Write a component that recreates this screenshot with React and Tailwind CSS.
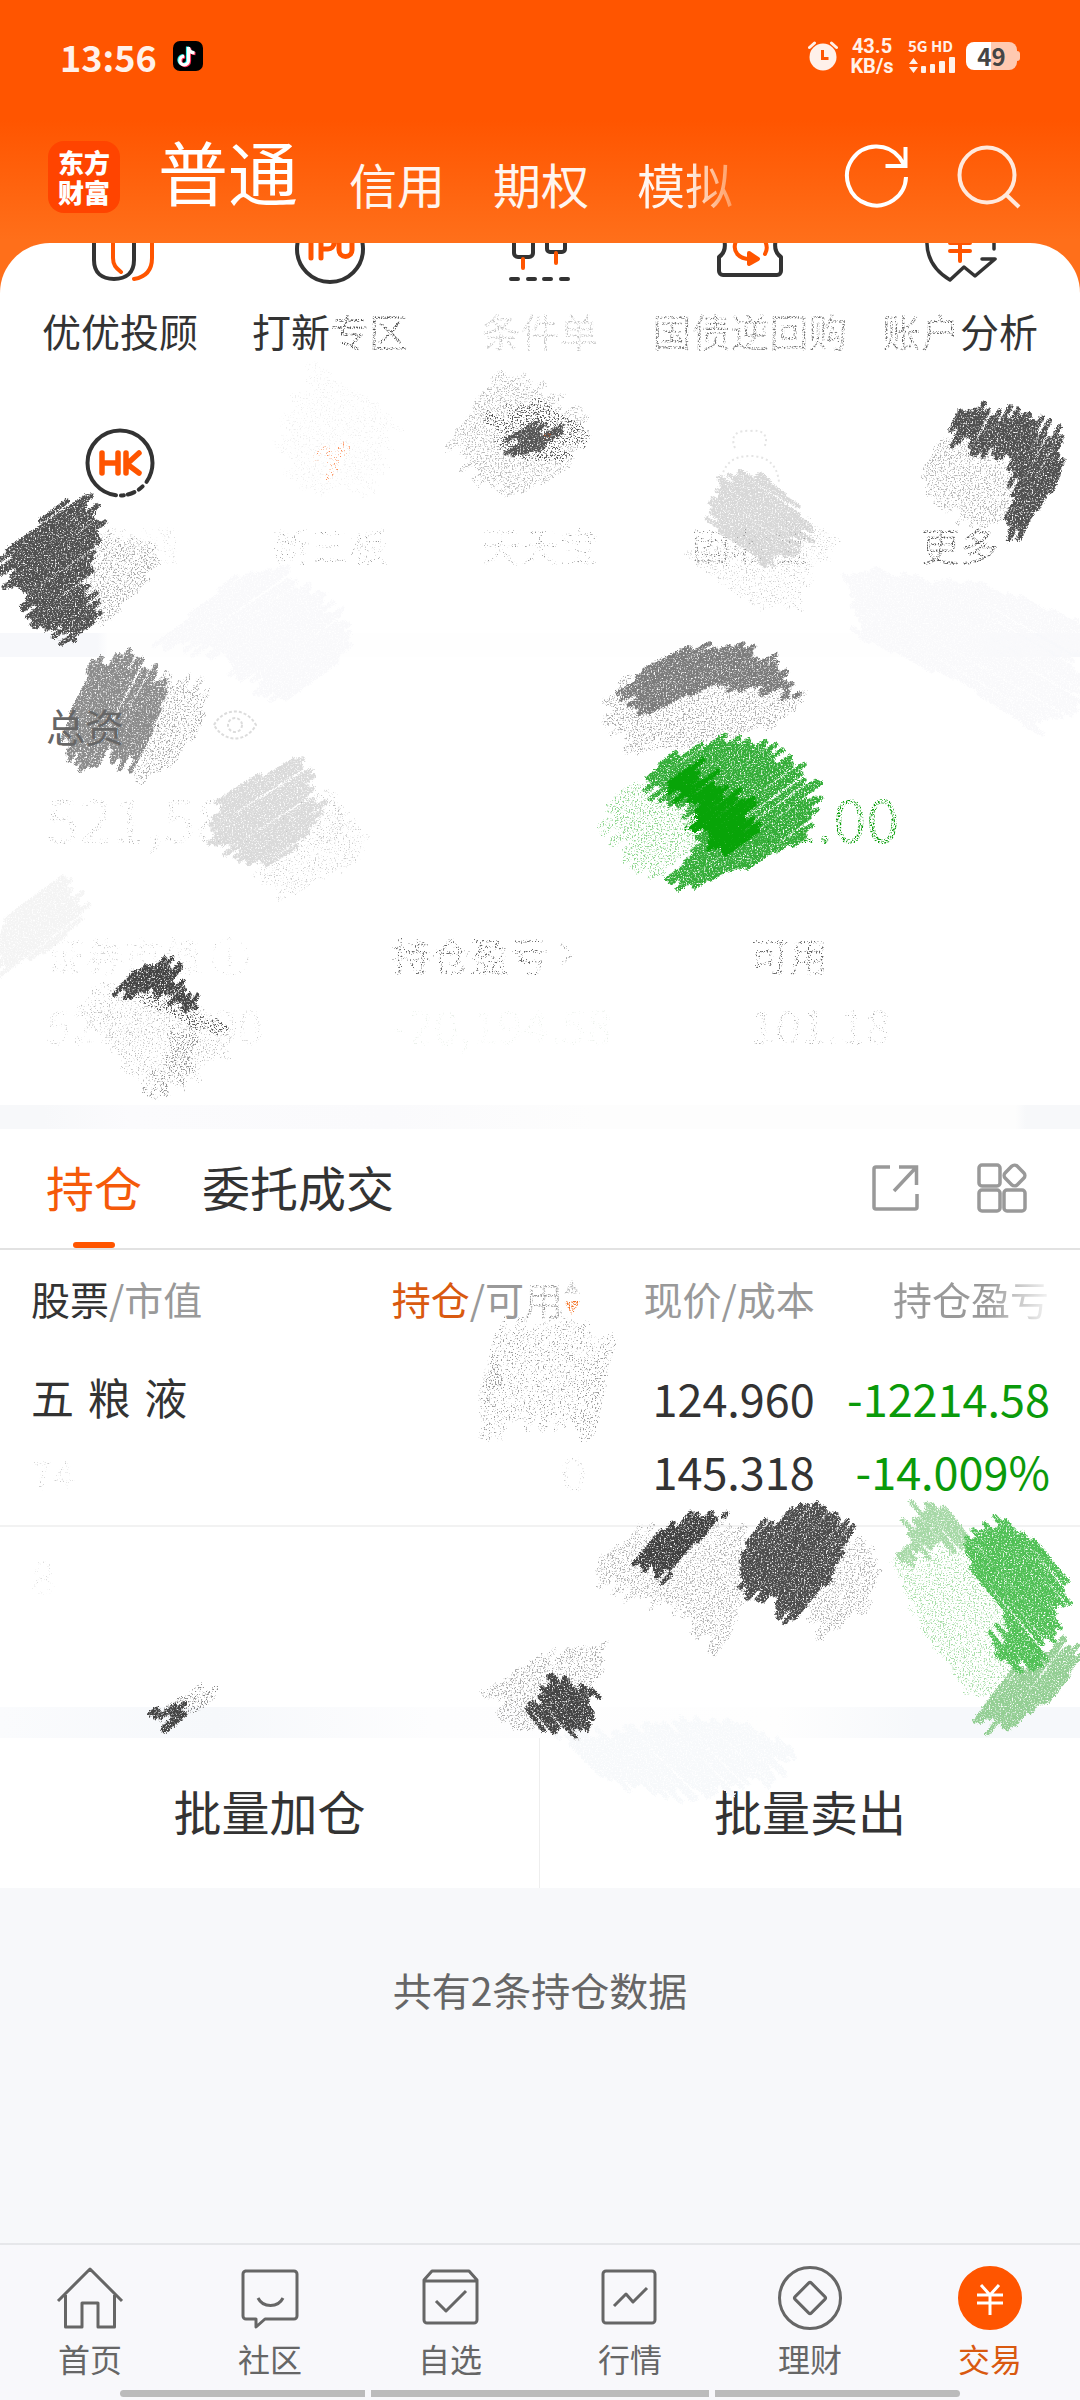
import React from 'react';

const DARK = '#333333';
const ORANGE = '#ff5500';

/* ---------- pencil scribbles ---------- */

const makeRandom = (seed) => {
  let s = seed * 7919 + 17;
  return () => {
    s = (s * 16807) % 2147483647;
    return s / 2147483647;
  };
};

// fills a polygon with parallel rough strokes
const hatch = (points, angle, seed, jitter = 22, step = 4) => {
  const rnd = makeRandom(seed);
  const a = (angle * Math.PI) / 180;
  const cos = Math.cos(a);
  const sin = Math.sin(a);
  const pts = points.map(([x, y]) => [x * cos + y * sin, -x * sin + y * cos]);
  const vs = pts.map((p) => p[1]);
  const max = Math.max(...vs);
  let d = '';
  for (let v = Math.min(...vs) + 2; v < max; v += step * (0.7 + rnd() * 0.6)) {
    const hits = [];
    pts.forEach((p, i) => {
      const q = pts[(i + 1) % pts.length];
      if ((p[1] <= v) !== (q[1] <= v)) hits.push(p[0] + ((v - p[1]) / (q[1] - p[1])) * (q[0] - p[0]));
    });
    hits.sort((m, n) => m - n);
    for (let i = 0; i + 1 < hits.length; i += 2) {
      const u1 = hits[i] + (rnd() - 0.5) * jitter;
      const u2 = hits[i + 1] + (rnd() - 0.5) * jitter;
      const w = v + (rnd() - 0.5) * 3;
      d += `M${(u1 * cos - v * sin).toFixed(1)} ${(u1 * sin + v * cos).toFixed(1)}L${(u2 * cos - w * sin).toFixed(1)} ${(u2 * sin + w * cos).toFixed(1)}`;
    }
  }
  return d;
};

const SCRIBBLES = [
  // quick entries
  { c: '#a8a8a8', f: 'speckle', a: -35, p: [[80, 540], [118, 533], [150, 552], [152, 580], [102, 626], [70, 610]] },
  { c: '#505050', f: 'grain', a: -35, p: [[4, 555], [60, 505], [90, 495], [98, 530], [96, 560], [84, 590], [100, 620], [72, 642], [46, 625], [10, 585]] },
  { c: '#eeeeee', f: 'dust', a: 30, p: [[320, 365], [396, 420], [370, 490], [300, 490], [280, 440]] },
  { c: '#ff8a50', f: 'dust', a: -50, p: [[318, 452], [346, 447], [330, 478]] },
  { c: '#bbbbbb', f: 'speckle', a: -35, p: [[452, 440], [500, 372], [545, 392], [588, 430], [560, 470], [520, 496], [470, 470]] },
  { c: '#555555', f: 'speckle', a: 30, p: [[490, 420], [540, 400], [584, 430], [555, 460], [510, 455]] },
  { c: '#555555', f: 'grain', a: -30, p: [[508, 440], [530, 425], [560, 432], [540, 450], [522, 456]] },
  { c: '#a5562f', f: 'speckle', a: -35, p: [[538, 444], [550, 430], [552, 436], [542, 448]] },
  { c: '#b4b4b4', f: 'speckle', a: -50, p: [[918, 475], [948, 432], [985, 450], [1018, 480], [1012, 515], [975, 525], [930, 500]] },
  { c: '#505050', f: 'grain', a: -62, p: [[948, 432], [966, 405], [1000, 412], [1040, 422], [1064, 440], [1060, 480], [1022, 532], [1004, 535], [1016, 490], [1004, 460], [975, 445]] },
  { c: '#d8d8d8', f: 'grain', a: 32, p: [[716, 510], [728, 474], [760, 472], [806, 510], [806, 535], [770, 568], [742, 545], [712, 528]] },
  { c: '#cccccc', f: 'dust', a: 32, p: [[690, 555], [740, 545], [806, 515], [830, 535], [790, 610], [745, 602]] },
  { c: '#f9f9fb', f: 'grain', a: -35, p: [[160, 640], [230, 580], [290, 570], [340, 620], [345, 660], [280, 702], [220, 655]] },
  { c: '#f9f9fb', f: 'grain', a: 30, p: [[840, 570], [880, 572], [1000, 590], [1080, 620], [1080, 700], [1035, 730], [960, 680], [860, 640]] },

  // asset summary
  { c: '#aaaaaa', f: 'speckle', a: -62, p: [[140, 745], [160, 680], [204, 688], [204, 720], [175, 765], [140, 785]] },
  { c: '#8c8c8c', f: 'grain', a: -62, p: [[68, 720], [90, 665], [118, 655], [150, 672], [164, 690], [150, 740], [138, 765], [105, 755], [80, 762], [64, 740]] },
  { c: '#cccccc', f: 'dust', a: -35, p: [[255, 865], [320, 790], [362, 830], [360, 860], [280, 900]] },
  { c: '#dadada', f: 'grain', a: -32, p: [[212, 820], [225, 795], [290, 760], [314, 775], [316, 820], [280, 860], [245, 862], [220, 845]] },
  { c: '#f4f4f4', f: 'grain', a: -38, p: [[0, 925], [60, 875], [90, 910], [50, 950], [0, 975]] },
  { c: '#bbbbbb', f: 'dust', a: 32, p: [[80, 1005], [120, 985], [190, 1000], [232, 1030], [215, 1065], [150, 1096], [120, 1060]] },
  { c: '#909090', f: 'speckle', a: 75, p: [[170, 1025], [195, 1030], [188, 1075], [145, 1096], [172, 1060]] },
  { c: '#444444', f: 'grain', a: -50, p: [[114, 992], [140, 965], [164, 960], [182, 985], [204, 1002], [194, 1008], [150, 994]] },
  { c: '#555555', f: 'speckle', a: 30, p: [[120, 990], [140, 986], [235, 1030], [222, 1040]] },
  { c: '#aaaaaa', f: 'speckle', a: -25, p: [[606, 715], [620, 680], [720, 680], [806, 695], [780, 722], [700, 745], [640, 752]] },
  { c: '#7c7c7c', f: 'grain', a: -28, p: [[622, 690], [650, 665], [690, 646], [750, 646], [785, 675], [798, 696], [770, 692], [715, 682], [645, 716]] },
  { c: '#8fd68f', f: 'speckle', a: -35, p: [[606, 805], [640, 778], [690, 800], [706, 840], [654, 878], [610, 830]] },
  { c: '#34ad38', f: 'grain', a: -35, p: [[640, 785], [664, 760], [725, 735], [764, 745], [806, 775], [818, 800], [800, 840], [735, 872], [680, 888], [664, 884], [706, 840], [690, 805]] },
  { c: '#08a408', f: 'solid', a: -38, p: [[664, 785], [692, 765], [715, 780], [750, 805], [750, 840], [720, 856], [704, 840], [690, 800]] },

  // holdings table
  { c: '#999999', f: 'dust', a: -75, p: [[478, 1400], [498, 1325], [560, 1322], [614, 1348], [594, 1432], [540, 1420], [484, 1435]] },
  { c: '#999999', f: 'speckle', a: -72, p: [[486, 1380], [494, 1360], [500, 1385], [484, 1410]] },
  { c: '#999999', f: 'dust', a: -75, p: [[575, 1390], [610, 1350], [596, 1430], [578, 1428]] },
  { c: '#b0b0b0', f: 'speckle', a: -55, p: [[592, 1570], [635, 1535], [735, 1525], [755, 1570], [720, 1650], [680, 1605], [640, 1600]] },
  { c: '#b0b0b0', f: 'speckle', a: -55, p: [[795, 1600], [845, 1535], [880, 1570], [868, 1605], [820, 1635]] },
  { c: '#404040', f: 'grain', a: -50, p: [[638, 1560], [662, 1528], [710, 1515], [722, 1520], [690, 1545], [668, 1577]] },
  { c: '#4c4c4c', f: 'grain', a: -50, p: [[738, 1565], [756, 1530], [815, 1500], [842, 1514], [850, 1545], [830, 1580], [795, 1618], [770, 1600], [745, 1585]] },
  { c: '#a6d8a6', f: 'grain', a: 50, p: [[900, 1560], [915, 1510], [950, 1512], [970, 1540], [925, 1552]] },
  { c: '#a8dea8', f: 'speckle', a: 45, p: [[892, 1565], [960, 1540], [1010, 1600], [1015, 1680], [970, 1700], [930, 1640]] },
  { c: '#93ce93', f: 'grain', a: -52, p: [[975, 1718], [1005, 1680], [1060, 1640], [1078, 1660], [1062, 1690], [1005, 1730]] },
  { c: '#50c055', f: 'grain', a: 50, p: [[962, 1535], [998, 1520], [1040, 1545], [1068, 1580], [1052, 1640], [1020, 1672], [990, 1650], [1010, 1615], [975, 1575]] },
  { c: '#aaaaaa', f: 'speckle', a: -48, p: [[482, 1690], [540, 1660], [600, 1640], [604, 1672], [570, 1695], [530, 1730]] },
  { c: '#444444', f: 'grain', a: 50, p: [[536, 1700], [560, 1682], [594, 1690], [594, 1715], [572, 1735], [552, 1735], [530, 1718]] },
  { c: '#888888', f: 'speckle', a: -40, p: [[148, 1715], [190, 1690], [215, 1695], [190, 1715]] },
  { c: '#444444', f: 'grain', a: -40, p: [[152, 1710], [166, 1706], [188, 1715], [172, 1728]] },
  { c: '#f7f9fb', f: 'grain', a: 45, p: [[560, 1740], [720, 1720], [790, 1745], [770, 1780], [670, 1796], [610, 1780]] },
];

const grainFilters = [
  ['solid', '0 0 0 -2 2.4'],
  ['grain', '0 0 0 -4 3.1'],
  ['speckle', '0 0 0 -7 3.3'],
  ['dust', '0 0 0 -6 2.5'],
  ['worn', '0 0 0 -5 2.7'],
];

function Scribbles() {
  return (
    <svg aria-hidden="true" className="absolute inset-x-0 top-0 w-full pointer-events-none" viewBox="0 0 1080 2400" fill="none">
      <defs>
        {grainFilters.map(([id, row]) => (
          <filter key={id} id={id} x="-5%" y="-10%" width="110%" height="120%" colorInterpolationFilters="sRGB">
            <feTurbulence type="fractalNoise" baseFrequency="0.65" numOctaves="2" seed="4" result="noise" />
            <feColorMatrix in="noise" values={`0 0 0 0 0 0 0 0 0 0 0 0 0 0 0 ${row}`} result="mask" />
            <feDisplacementMap in="SourceGraphic" in2="noise" scale="5" xChannelSelector="R" yChannelSelector="G" result="rough" />
            <feComposite in={id === 'worn' ? 'SourceGraphic' : 'rough'} in2="mask" operator="in" />
          </filter>
        ))}
      </defs>
      {SCRIBBLES.map((s, i) => (
        <path key={i} d={hatch(s.p, s.a, i + 1)} stroke={s.c} strokeWidth="5" strokeLinecap="round" filter={`url(#${s.f})`} />
      ))}
    </svg>
  );
}

/* ---------- header ---------- */

function StatusBar() {
  return (
    <div className="flex items-center justify-between pt-[34px] px-[60px] h-[78px] text-[#fff1ea]">
      <div className="flex items-center gap-4">
        <span className="text-[36px] leading-[42px] font-bold">13:56</span>
        <svg width="30" height="30" viewBox="0 0 30 30">
          <rect width="30" height="30" rx="7" fill="#000" />
          <g fill="none" strokeWidth="3.2">
            <path d="M15.5 6v13.5a4.3 4.3 0 1 1-4.3-4.3M15.5 6.5c.5 3.4 2.8 5.2 6 5.4" stroke="#25f4ee" transform="translate(-1 -.5)" />
            <path d="M15.5 6v13.5a4.3 4.3 0 1 1-4.3-4.3M15.5 6.5c.5 3.4 2.8 5.2 6 5.4" stroke="#fe2c55" transform="translate(1 .8)" />
            <path d="M15.5 6v13.5a4.3 4.3 0 1 1-4.3-4.3M15.5 6.5c.5 3.4 2.8 5.2 6 5.4" stroke="#fff" />
          </g>
        </svg>
      </div>
      <div className="flex items-center">
        <svg width="30" height="30" viewBox="0 0 30 30">
          <circle cx="15" cy="16" r="13.5" fill="#fff1ea" />
          <path d="M1.5 6.5l5-4.5M28.500 6.500l-5-4.500" stroke="#fff1ea" strokeWidth="3" strokeLinecap="round" />
          <path d="M14.500 9v8.500h6" fill="none" stroke={ORANGE} strokeWidth="3" />
        </svg>
        <div className="ml-2.5 w-12 text-center font-['Roboto','Noto_Sans_CJK_SC',sans-serif] text-[20px] leading-5 font-bold">
          <div>43.5</div>
          <div>KB/s</div>
        </div>
        <div className="ml-3 w-[50px] whitespace-nowrap">
          <div className="text-[15px] leading-4 font-bold">5G HD</div>
          <svg className="mt-0.5" width="50" height="18" viewBox="0 0 50 18" fill="#fff1ea">
            <path d="M1 8l4.500-6L10 8zM1 11h9l-4.500 6z" />
            <rect x="13" y="10" width="5" height="7" rx="1" />
            <rect x="22" y="8" width="5" height="9" rx="1" />
            <rect x="31" y="5" width="6" height="12" rx="1" />
            <rect x="41" y="1" width="6" height="16" rx="1" />
          </svg>
        </div>
        <div className="ml-2 flex items-center">
          <span className="flex h-[28px] w-[51px] items-center justify-center rounded-lg bg-[linear-gradient(90deg,#fff_50%,#ffc9b0_50%)] text-[24px] leading-[28px] font-bold text-[#444]">49</span>
          <span className="h-2.5 w-[3px] rounded-r bg-[#ffc9b0]" />
        </div>
      </div>
    </div>
  );
}

function TopNav() {
  return (
    <nav className="flex items-center pl-12 pr-[58px] pt-[57px]">
      <div className="flex size-[72px] flex-col items-center justify-center rounded-2xl bg-[#ff4400] text-[26px] leading-[30px] font-black text-white">
        <span>东方</span>
        <span>财富</span>
      </div>
      <div className="ml-[38px] flex flex-1 items-end whitespace-nowrap text-[48px] leading-[72px] text-[#fff5ef]">
        <button className="pb-3 text-[70px] leading-[72px] text-white">普通</button>
        <button className="ml-[51px]">信用</button>
        <button className="ml-[48px]">期权</button>
        <button className="ml-[48px] bg-[linear-gradient(90deg,#fff5ef_50%,#ff9a5e_100%)] bg-clip-text text-transparent">模拟</button>
      </div>
      <button aria-label="刷新">
        <svg width="66" height="66" viewBox="0 0 66 66" fill="none" stroke="#fff" strokeWidth="4">
          <path d="M62 33a29.500 29.500 0 1 1-6.500-19.500l5 8M61.500 3v19h-20" />
        </svg>
      </button>
      <button aria-label="搜索" className="ml-[46px]">
        <svg width="66" height="66" viewBox="0 0 66 66" fill="none" stroke="#ffe9dd" strokeWidth="4">
          <circle cx="31" cy="31" r="27.500" />
          <path d="M50 50.500l13 12.500" />
        </svg>
      </button>
    </nav>
  );
}

/* ---------- quick entries ---------- */

const topIcons = [
  <g key="u">
    <path d="M14-4v22c0 13 8 19 20 19s20-6 20-19V-4" transform="translate(0 -1)" stroke={DARK} />
    <path d="M33-4v20c0 7 3 10 8 14" transform="translate(0 -1)" stroke={ORANGE} />
    <path d="M72-4v20c0 12-6 19-18 21" transform="translate(0 -1)" stroke={ORANGE} />
  </g>,
  <g key="ipo">
    <circle cx="40" cy="6" r="33" stroke={DARK} />
    <path d="M21-6v21M31 15V-6h7a6 6 0 0 1 0 12h-7M49-6v13a6.500 6.500 0 0 0 13 0V-6" stroke={ORANGE} strokeWidth="5" />
  </g>,
  <g key="cond">
    <path d="M14-4v14a4 4 0 0 0 4 4h11a4 4 0 0 0 4-4V-4M47-4v10a3 3 0 0 0 3 3h12a3 3 0 0 0 3-3V-4" stroke={DARK} />
    <path d="M23 16v9M56 10v10" stroke={ORANGE} />
    <path d="M11 36h7M28 36h7M44 36h7M61 36h7" stroke={DARK} />
  </g>,
  <g key="bond">
    <path d="M14-4c2 8 1 14-5 18v14a4 4 0 0 0 4 4h54a4 4 0 0 0 4-4V14c-6-4-7-10-5-18" stroke={DARK} />
    <path d="M26-2c-4 10 2 19 17 18M55 11c3-5 2-9 0-13" stroke={ORANGE} />
    <path d="M39 10l9 6-9 5z" fill={ORANGE} stroke={ORANGE} />
  </g>,
  <g key="account">
    <path d="M7-4c-1 18 8 32 23 41L44 24l11 9 20-17H62M74-4v10" stroke={DARK} strokeWidth="3.500" />
    <path d="M30 0h20M30 8h20M40-4v22" stroke={ORANGE} />
  </g>,
];

const entriesTop = [
  <span key="1">优优投顾</span>,
  <span key="2">打新<span className="text-[#555] [filter:url(#worn)]">专区</span></span>,
  <span key="3" className="text-[#c4c4c4] [filter:url(#worn)]">条件单</span>,
  <span key="4" className="text-[#777] [filter:url(#worn)]">国债逆回购</span>,
  <span key="5"><span className="text-[#666] [filter:url(#worn)]">账户</span>分析</span>,
];

function QuickEntries() {
  return (
    <section className="grid grid-cols-5 px-[15px] text-[39px] leading-[48px] whitespace-nowrap text-[#333]">
      {entriesTop.map((label, i) => (
        <button key={i} className="flex flex-col items-center">
          <svg width="80" height="63" viewBox="0 0 80 63" fill="none" strokeWidth="4" strokeLinecap="round" strokeLinejoin="round">
            {topIcons[i]}
          </svg>
          {label}
        </button>
      ))}
      <button className="mt-[74px] flex flex-col items-center">
        <svg className="mb-[21px]" width="70" height="70" viewBox="0 0 70 70" fill="none" strokeLinecap="round" strokeLinejoin="round">
          <circle cx="35" cy="35" r="32.500" stroke={DARK} strokeWidth="4" strokeDasharray="20 6 5 5 7 4 3 5 150" />
          <path d="M17 25v20M33 25v20M17 35h16M41 25v20M54 25L42 36l12 9" stroke={ORANGE} strokeWidth="5.500" />
        </svg>
        <span className="text-[#ddd] [filter:url(#dust)]">港股通</span>
      </button>
      <button className="mt-[74px] flex flex-col items-center justify-end text-[#999]"><span className="[filter:url(#dust)]">新三板</span></button>
      <button className="mt-[74px] flex flex-col items-center justify-end text-[#999]"><span className="[filter:url(#dust)]">天天宝</span></button>
      <button className="mt-[74px] flex flex-col items-center justify-end text-[#888]">
        <svg className="mb-2" width="70" height="84" viewBox="0 0 70 84" fill="none" stroke="#e4e4e4" strokeWidth="2" strokeDasharray="2 3">
          <path d="M20 20c-6-14 4-18 15-17 12-2 20 4 14 17M6 54c2-18 12-26 29-26s27 8 29 26" />
        </svg>
        <span className="[filter:url(#speckle)]">固收宝</span>
      </button>
      <button className="mt-[74px] flex flex-col items-center justify-end text-[#555]"><span className="[filter:url(#worn)]">更多</span></button>
    </section>
  );
}

/* ---------- assets ---------- */

function Assets() {
  return (
    <section className="pl-[46px] text-[39px] leading-[48px] whitespace-nowrap">
      <div className="flex items-center pt-11 text-[#666]">
        <span className="relative z-10">总资</span><span className="[filter:url(#worn)]">产</span>
        <svg className="ml-[49px]" width="46" height="32" viewBox="0 0 46 32" fill="none" stroke="#dcdcdc" strokeWidth="2" strokeDasharray="3 2">
          <path d="M2 16C12-2 34-2 44 16 34 34 12 34 2 16z" />
          <circle cx="23" cy="16" r="7" />
        </svg>
      </div>
      <div className="grid grid-cols-[565px_1fr] pt-[30px] text-[60px] leading-[76px]">
        <span className="text-[#bbb] [filter:url(#dust)]">521,580.00</span>
        <span className="pl-[72px] text-[#0a9f0a] [filter:url(#worn)]">4621.00</span>
      </div>
      <div className="grid grid-cols-[346px_358px_1fr] pt-[75px] text-[#999]">
        <span className="text-[#ccc] [filter:url(#dust)]">证券市值 ⓘ</span>
        <span className="flex items-center gap-3 text-[#666] [filter:url(#speckle)]">持仓盈亏
          <svg width="14" height="26" viewBox="0 0 14 26" fill="none" stroke="#aaa" strokeWidth="2"><path d="M1 2l11 11L1 24" /></svg>
        </span>
        <span className="text-[#666] [filter:url(#speckle)]">可用</span>
      </div>
      <div className="grid grid-cols-[346px_358px_1fr] pt-4 pb-[51px] text-[46px] leading-[60px]">
        <span className="text-[#ccc] [filter:url(#dust)]">521479.00</span>
        <span className="text-[#eaf0ea] [filter:url(#dust)]">-20,194.58</span>
        <span className="text-[#aaa] [filter:url(#dust)]">101.18</span>
      </div>
    </section>
  );
}

/* ---------- holdings ---------- */

function HoldingTabs() {
  return (
    <div className="flex h-[121px] items-stretch border-b-2 border-[#e2e2e2] pl-[46px] pr-[52px] text-[48px] leading-[60px]">
      <button className="flex flex-col items-center justify-between pt-[27px] text-[#f55a0a]">
        持仓
        <span className="h-1.5 w-[42px] rounded-full bg-[#ff5500]" />
      </button>
      <button className="ml-[60px] self-start pt-[27px] text-[#333]">委托成交</button>
      <div className="ml-auto flex items-center gap-14 text-[#999]">
        <button aria-label="分享">
          <svg width="50" height="50" viewBox="0 0 50 50" fill="none" stroke="currentColor" strokeWidth="3.500">
            <path d="M20 3H6a2 2 0 0 0-2 2v38a2 2 0 0 0 2 2h39a2 2 0 0 0 2-2V30M29 3h17.500v18M46 3.500L24 27" />
          </svg>
        </button>
        <button aria-label="更多功能">
          <svg width="52" height="52" viewBox="0 0 52 52" fill="none" stroke="currentColor" strokeWidth="3.500">
            <rect x="3" y="2" width="21" height="21" rx="3" />
            <rect x="3" y="27" width="21" height="21" rx="3" />
            <rect x="28" y="27" width="21" height="21" rx="3" />
            <rect x="30" y="4" width="17" height="17" rx="4" transform="rotate(45 38.500 12.500)" />
          </svg>
        </button>
      </div>
    </div>
  );
}

function HoldingTable() {
  return (
    <table className="w-full table-fixed whitespace-nowrap text-[#333]">
      <colgroup>
        <col className="w-[36%]" />
        <col className="w-[19%]" />
        <col />
        <col className="w-[24%]" />
      </colgroup>
      <thead className="text-[39px] leading-[48px] text-[#999]">
        <tr className="h-[95px]">
          <th className="pl-[31px] text-left font-normal"><span className="text-[#333]">股票</span>/市值</th>
          <th className="text-left font-normal">
            <span className="flex items-center pl-[3px]">
              <span className="text-[#d9590f]">持仓</span>/可<span className="[filter:url(#worn)]">用</span>
              <svg className="[filter:url(#worn)]" width="18" height="36" viewBox="0 0 18 36"><path d="M1 14L9 0l8 14z" fill="#bbb" /><path d="M1 21h16L9 35z" fill="#f37021" /></svg>
            </span>
          </th>
          <th className="pr-1.5 text-right font-normal">现价/成本</th>
          <th className="pr-[31px] text-right font-normal"><span className="bg-[linear-gradient(90deg,#999_60%,#f4f4f4_100%)] bg-clip-text text-transparent">持仓盈亏</span></th>
        </tr>
      </thead>
      <tbody>
        <tr className="h-[181px] border-b-2 border-[#f2f2f2] align-top">
          <td className="pt-[19px] pl-[31px] leading-[73px]">
            <div className="font-['DejaVu_Sans','Noto_Sans_CJK_SC',sans-serif] text-[43px]">五 粮 液</div>
            <div className="text-[39px] text-[#ccc] [filter:url(#dust)]">74</div>
          </td>
          <td className="pt-[89px] pr-2 text-right text-[45px] leading-[73px] text-[#ccc]"><span className="[filter:url(#dust)]">0</span></td>
          <td className="pt-4 pr-1.5 text-right text-[45px] leading-[73px]">124.960<br />145.318</td>
          <td className="pt-4 pr-[30px] text-right text-[45px] leading-[73px] text-[#0a9a0a]">-12214.58<br />-14.009%</td>
        </tr>
        <tr className="h-[181px] align-top">
          <td className="pt-3 pl-[31px] text-[43px] leading-[73px] text-[#ddd]"><span className="[filter:url(#dust)]">8</span></td>
          <td /><td /><td />
        </tr>
      </tbody>
    </table>
  );
}

/* ---------- bottom bar ---------- */

const tabs = [
  { label: '首页', icon: <path d="M3 36L35 4l32 32M10.500 30v32H27V38h16v24h16.500V30" /> },
  { label: '社区', icon: <path d="M10 6h49a3 3 0 0 1 3 3v42a3 3 0 0 1-3 3H30l-9 8v-8H11a3 3 0 0 1-3-3V9a3 3 0 0 1 3-3M23 33c5 10 20 10 25 0" /> },
  { label: '自选', icon: <path d="M9 15l8-9h37l8 9v40a3 3 0 0 1-3 3H12a3 3 0 0 1-3-3zM9 16h53M21 36l10 10 20-20" /> },
  { label: '行情', icon: <path d="M11 6h46a3 3 0 0 1 3 3v46a3 3 0 0 1-3 3H11a3 3 0 0 1-3-3V9a3 3 0 0 1 3-3M19 41l12-12 7 8 14-14" /> },
  { label: '理财', icon: <g><circle cx="35" cy="33" r="30.500" /><rect x="23.500" y="21.500" width="23" height="23" rx="2" transform="rotate(45 35 33)" /></g> },
  { label: '交易', active: true, icon: <g><circle cx="35" cy="33" r="30.500" fill={ORANGE} stroke={ORANGE} /><path d="M26 20l9 10 9-10M35 30v20M22 30h26M22 38h26" stroke="#fff" strokeWidth="3" /></g> },
];

function BottomBar() {
  return (
    <footer className="mt-auto border-t-2 border-[#e6e7ea] bg-[#f8f8fb]">
      <nav className="grid grid-cols-6 pt-5">
        {tabs.map((t) => (
          <a key={t.label} href="#" className={`flex flex-col items-center text-[32px] leading-[42px] ${t.active ? 'text-[#d9590f]' : 'text-[#666]'}`}>
            <svg className="mb-1.5" width="70" height="66" viewBox="0 0 70 66" fill="none" stroke="#666" strokeWidth="3" strokeLinejoin="round">
              {t.icon}
            </svg>
            {t.label}
          </a>
        ))}
      </nav>
      <div className="mt-[11px] mb-[3px] flex h-[7px] justify-center gap-1.5 px-[120px]">
        <span className="w-[245px] rounded-l-full bg-[#bbb]" />
        <span className="flex-1 bg-[#bbb]" />
        <span className="w-[245px] rounded-r-full bg-[#bbb]" />
      </div>
    </footer>
  );
}

export default function App() {
  return (
    <div className="relative flex min-h-screen flex-col overflow-hidden bg-[#f7f8fa] font-['Noto_Sans_CJK_SC',sans-serif]">
      <header className="h-[300px] bg-[linear-gradient(180deg,#ff5500_0px,#ff5500_120px,#ff6f1a_240px)]">
        <StatusBar />
        <TopNav />
      </header>
      <main className="-mt-[57px] overflow-hidden rounded-t-[50px] bg-white">
        <QuickEntries />
        <div className="mt-[65px] h-6 bg-[linear-gradient(90deg,#f7f8fb_9%,#fefefe_10%,#fefefe_90%,#f7f8fb_92%)]" />
        <Assets />
        <div className="h-6 bg-[linear-gradient(90deg,#f7f8fa_4%,#fbfbfd_12%,#fafafc_36%,#fdfdfd_55%,#fdfdfd_94%,#f7f8fa_95%)]" />
        <HoldingTabs />
        <HoldingTable />
        <div className="h-[31px] bg-[linear-gradient(90deg,#fafbfd_0%,#f6f8fb_20%,#fdfdfe_40%,#fefefe_72%,#f6f8fb_85%)]" />
        <div className="grid grid-cols-2 text-[48px] leading-[60px] text-[#333]">
          <button className="h-[150px] border-r border-[#eeeeee] pb-1.5">批量加仓</button>
          <button className="h-[150px] pb-1.5">批量卖出</button>
        </div>
      </main>
      <p className="pt-[77px] text-center text-[39px] leading-[48px] text-[#666]">共有2条持仓数据</p>
      <BottomBar />
      <Scribbles />
    </div>
  );
}
